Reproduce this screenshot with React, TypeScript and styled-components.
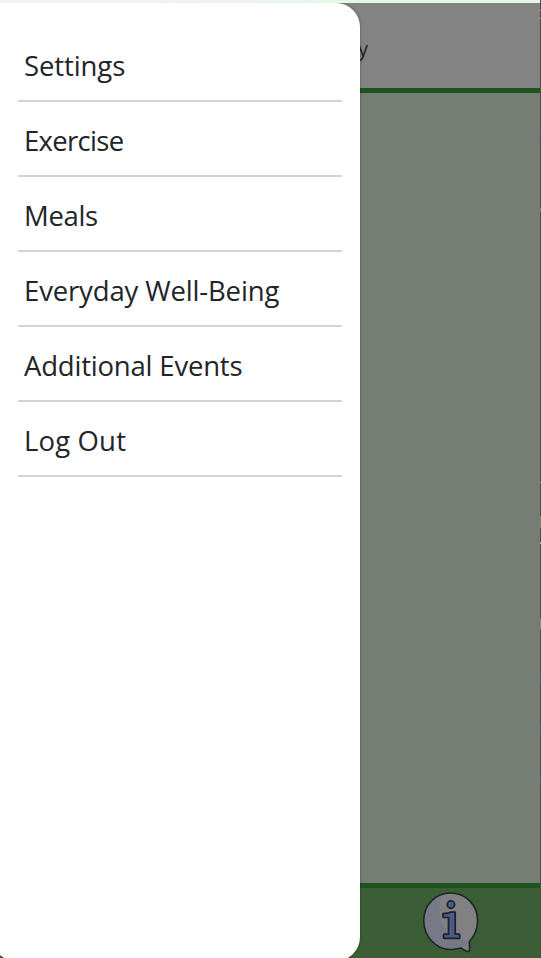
import React from "react";
import styled, { createGlobalStyle } from "styled-components";

const GlobalStyle = createGlobalStyle`
  html, body, #root { margin: 0; height: 100%; }
  body { overflow: hidden; font-family: "Open Sans", "Noto Sans", sans-serif; }
  * { box-sizing: border-box; }
`;

const Screen = styled.div`
  position: relative;
  height: 100vh;
  display: grid;
  grid-template-columns: 1fr 1px;
  grid-template-rows: 3px 1fr;
  overflow: hidden;
`;

const TopStrip = styled.div`
  background: linear-gradient(90deg, #f2f2f2 0 130px, #e8f5e9 320px);
`;

const Page = styled.div`
  grid-row: 2;
  display: flex;
  flex-direction: column;
  background: #757d74;
`;

const Header = styled.header`
  height: 90px;
  padding: 34px 172px 0 0;
  background: #838383;
  border-bottom: 5px solid #1e521e;
  text-align: right;
  font-size: 20px;
  line-height: 24px;
  color: #202226;
`;

const Content = styled.main`
  flex: 1;
`;

const Footer = styled.footer`
  height: 75px;
  padding: 3px 61px 0 0;
  display: flex;
  justify-content: flex-end;
  background: #3c5e37;
  border-top: 5px solid #1e521e;
`;

const Edge = styled.div`
  grid-row: 1 / 3;
  grid-column: 2;
  display: flex;
  flex-direction: column;
  background: #484c48;
`;

const EdgeMark = styled.i<{ $gap: number; $size: number; $color: string }>`
  flex: none;
  margin-top: ${(p) => p.$gap}px;
  height: ${(p) => p.$size}px;
  background: ${(p) => p.$color};
`;

const Drawer = styled.nav`
  position: absolute;
  top: 3px;
  left: -8px;
  width: 368px;
  height: 958px;
  padding: 24px 18px 0 26px;
  background: #fff;
  border-radius: 0 24px 24px 24px;
  box-shadow: 0 0 3px rgba(0, 0, 0, 0.35);
  clip-path: inset(0 -4px -4px 0);
`;

const MenuItem = styled.a<{ $spacing: number }>`
  display: block;
  height: 75px;
  padding: 20px 6px 0;
  border-bottom: 2px solid #d3d3d3;
  font-size: 27.5px;
  line-height: 38px;
  letter-spacing: ${(p) => p.$spacing}px;
  white-space: nowrap;
  color: #212529;
`;

const items = [
  { label: "Settings", spacing: -0.1 },
  { label: "Exercise", spacing: -0.7 },
  { label: "Meals", spacing: -0.35 },
  { label: "Everyday Well-Being", spacing: -0.15 },
  { label: "Additional Events", spacing: -0.2 },
  { label: "Log Out", spacing: 0.15 },
];

const marks = [
  { gap: 10, size: 1, color: "#999" },
  { gap: 7, size: 1, color: "#999" },
  { gap: 110, size: 9, color: "#405364" },
  { gap: 70, size: 4, color: "#627c82" },
  { gap: 270, size: 1, color: "#aaa" },
  { gap: 33, size: 12, color: "#8c8065" },
  { gap: 14, size: 2, color: "#aaa" },
  { gap: 74, size: 12, color: "#8c8065" },
  { gap: 44, size: 9, color: "#31628a" },
  { gap: 42, size: 9, color: "#31628a" },
  { gap: 42, size: 9, color: "#31628a" },
];

function InfoIcon() {
  return (
    <svg width="58" height="62" viewBox="0 0 58 62" fill="none">
      <path
        d="M29.500 2C14.500 2 2.700 14 2.700 29.500c0 16 12 29 27.300 29 4 0 7-1 10-1.500 3 1.500 5 4 8 3.500 1.500-2 0-6 .5-10C53.500 45 56.600 38 56.600 29.500 56.600 14 44.500 2 29.500 2Z"
        fill="#818183"
      />
      <path
        d="M21 3.400C10 7 2.700 17 2.700 29.500c0 16 12 29 27.300 29 6 0 10-1 14-3.500 2-1.500 5-3.500 6-6C26 50 12 28 21 3.400Z"
        fill="#777986"
      />
      <path
        d="M29.500 2C14.500 2 2.700 14 2.700 29.500c0 16 12 29 27.300 29 4 0 7-1 10-1.500 3 1.500 5 4 8 3.500 1.500-2 0-6 .5-10C53.500 45 56.600 38 56.600 29.500 56.600 14 44.500 2 29.500 2Z"
        stroke="#202521"
        strokeWidth="1.600"
      />
      <g fill="#4b5d86" stroke="#1c222a" strokeWidth="1.700" strokeLinejoin="round">
        <circle cx="29.900" cy="13.600" r="3.700" />
        <path d="M22.500 22.500q5 0 7.500-1.500h4.200v22.200h3.600q1 0 1 1v2.200q0 1-1 1H23.500q-1 0-1-1v-2.200q0-1 1-1h4V26.500h-5q-.6 0-.6-1V23Z" />
      </g>
    </svg>
  );
}

export default function App() {
  return (
    <>
      <GlobalStyle />
      <Screen>
        <TopStrip />
        <Page>
          <Header>y</Header>
          <Content />
          <Footer>
            <InfoIcon />
          </Footer>
        </Page>
        <Edge>
          {marks.map((m, i) => (
            <EdgeMark key={i} $gap={m.gap} $size={m.size} $color={m.color} />
          ))}
        </Edge>
        <Drawer>
          {items.map((item) => (
            <MenuItem key={item.label} $spacing={item.spacing}>
              {item.label}
            </MenuItem>
          ))}
        </Drawer>
      </Screen>
    </>
  );
}
